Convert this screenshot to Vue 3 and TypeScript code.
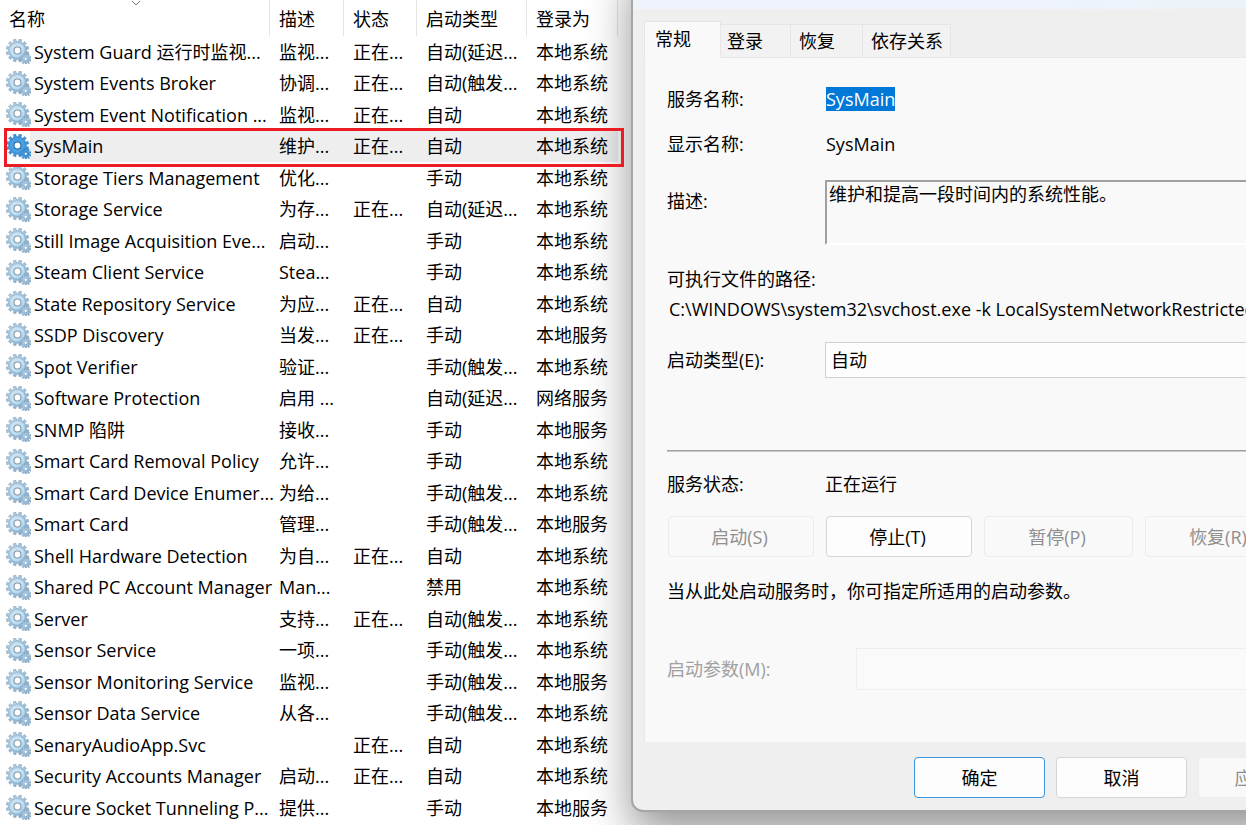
<script setup lang="ts">
import { ref } from 'vue'

interface Service {
  name: string
  desc: string
  status: string
  startup: string
  logon: string
}

const running = '正在...'
const sys = '本地系统'
const local = '本地服务'
const auto = '自动'
const manual = '手动'
const delayed = '自动(延迟...'
const autoTrigger = '自动(触发...'
const manualTrigger = '手动(触发...'

const row = (name: string, desc: string, status: string, startup: string, logon: string): Service => ({
  name, desc, status, startup, logon,
})

const services: Service[] = [
  row('System Guard 运行时监视...', '监视...', running, delayed, sys),
  row('System Events Broker', '协调...', running, autoTrigger, sys),
  row('System Event Notification ...', '监视...', running, auto, sys),
  row('SysMain', '维护...', running, auto, sys),
  row('Storage Tiers Management', '优化...', '', manual, sys),
  row('Storage Service', '为存...', running, delayed, sys),
  row('Still Image Acquisition Eve...', '启动...', '', manual, sys),
  row('Steam Client Service', 'Stea...', '', manual, sys),
  row('State Repository Service', '为应...', running, auto, sys),
  row('SSDP Discovery', '当发...', running, manual, local),
  row('Spot Verifier', '验证...', '', manualTrigger, sys),
  row('Software Protection', '启用 ...', '', delayed, '网络服务'),
  row('SNMP 陷阱', '接收...', '', manual, local),
  row('Smart Card Removal Policy', '允许...', '', manual, sys),
  row('Smart Card Device Enumer...', '为给...', '', manualTrigger, sys),
  row('Smart Card', '管理...', '', manualTrigger, local),
  row('Shell Hardware Detection', '为自...', running, auto, sys),
  row('Shared PC Account Manager', 'Man...', '', '禁用', sys),
  row('Server', '支持...', running, autoTrigger, sys),
  row('Sensor Service', '一项...', '', manualTrigger, sys),
  row('Sensor Monitoring Service', '监视...', '', manualTrigger, local),
  row('Sensor Data Service', '从各...', '', manualTrigger, sys),
  row('SenaryAudioApp.Svc', '', running, auto, sys),
  row('Security Accounts Manager', '启动...', running, auto, sys),
  row('Secure Socket Tunneling P...', '提供...', '', manual, local),
]

const selected = ref('SysMain')
const tabs = ['常规', '登录', '恢复', '依存关系']
const activeTab = ref('常规')
const startupType = ref('自动')

// Outline of a toothed wheel, teeth cut square between two radii.
function gear(cx: number, cy: number, outer: number, inner: number, teeth: number): string {
  const points: string[] = []
  const step = (Math.PI * 2) / teeth
  for (let i = 0; i < teeth; i++) {
    const a = (i + 0.5) * step
    const corners: [number, number][] = [
      [inner, a - step * 0.28], [outer, a - step * 0.24], [outer, a + step * 0.24], [inner, a + step * 0.28],
    ]
    for (const [r, t] of corners) {
      points.push(`${(cx + r * Math.cos(t)).toFixed(2)} ${(cy + r * Math.sin(t)).toFixed(2)}`)
    }
  }
  return `M${points.join('L')}Z`
}

const bigGear = gear(11, 11, 11, 8.6, 12)
const smallGear = gear(19, 19, 5.4, 3.8, 10)
</script>

<template>
  <div class="screen" lang="zh-CN">
    <svg class="defs" aria-hidden="true">
      <defs>
        <linearGradient id="steel" x1="0" y1="0" x2="1" y2="1">
          <stop offset="0" stop-color="#b9cfe0" />
          <stop offset="0.5" stop-color="#9dbfda" />
          <stop offset="1" stop-color="#7fa6c6" />
        </linearGradient>
        <linearGradient id="steel-face" x1="0" y1="0" x2="1" y2="1">
          <stop offset="0" stop-color="#d2e3ef" />
          <stop offset="0.6" stop-color="#bfe0f5" />
          <stop offset="1" stop-color="#9cc6e4" />
        </linearGradient>
      </defs>
    </svg>

    <main class="list">
      <table class="services">
        <colgroup>
          <col class="c-name"><col class="c-desc"><col class="c-status"><col class="c-type"><col class="c-logon">
        </colgroup>
        <thead>
          <tr>
            <th scope="col">
              名称
              <svg class="sort" viewBox="0 0 10 6" aria-hidden="true"><path d="M1 1L5 5L9 1" /></svg>
            </th>
            <th scope="col">描述</th>
            <th scope="col">状态</th>
            <th scope="col">启动类型</th>
            <th scope="col">登录为</th>
          </tr>
        </thead>
        <tbody>
          <tr v-for="s in services" :key="s.name" :class="{ selected: s.name === selected }" @click="selected = s.name">
            <td>
              <div class="name">
                <svg class="gear" viewBox="0 0 24 24" aria-hidden="true">
                  <path class="wheel" :d="bigGear" />
                  <circle class="face" cx="11" cy="11" r="7" />
                  <circle class="rim" cx="11" cy="11" r="3.9" />
                  <circle class="hole" cx="11" cy="11" r="2.8" />
                  <path class="wheel small" :d="smallGear" />
                  <circle class="hole" cx="19" cy="19" r="1.1" />
                </svg>
                <span>{{ s.name }}</span>
              </div>
            </td>
            <td>{{ s.desc }}</td>
            <td>{{ s.status }}</td>
            <td>{{ s.startup }}</td>
            <td>{{ s.logon }}</td>
          </tr>
        </tbody>
      </table>
    </main>

    <section class="dialog" role="dialog" aria-label="SysMain">
      <div class="titlebar"></div>
      <div class="content">
        <div class="tabs" role="tablist">
          <button
            v-for="t in tabs" :key="t" type="button" role="tab" class="tab"
            :class="{ active: t === activeTab }" :aria-selected="t === activeTab" @click="activeTab = t"
          >{{ t }}</button>
        </div>

        <div class="panel" role="tabpanel">
          <div class="field">
            <span>服务名称:</span>
            <span class="value"><mark>SysMain</mark></span>
          </div>
          <div class="field display">
            <span>显示名称:</span>
            <span class="value">SysMain</span>
          </div>
          <div class="field desc">
            <label for="desc">描述:</label>
            <textarea id="desc" readonly>维护和提高一段时间内的系统性能。</textarea>
          </div>
          <div class="path">
            <div>可执行文件的路径:</div>
            <div class="file">C:\WINDOWS\system32\svchost.exe -k LocalSystemNetworkRestricted -p</div>
          </div>
          <div class="field type">
            <label for="type">启动类型(E):</label>
            <select id="type" v-model="startupType">
              <option>自动</option>
              <option>手动</option>
              <option>禁用</option>
            </select>
          </div>
          <hr>
          <div class="field">
            <span>服务状态:</span>
            <span>正在运行</span>
          </div>
          <div class="actions">
            <button type="button" class="btn" disabled>启动(S)</button>
            <button type="button" class="btn">停止(T)</button>
            <button type="button" class="btn" disabled>暂停(P)</button>
            <button type="button" class="btn" disabled>恢复(R)</button>
          </div>
          <p class="hint">当从此处启动服务时，你可指定所适用的启动参数。</p>
          <div class="params">
            <label for="params">启动参数(M):</label>
            <input id="params" type="text" disabled>
          </div>
        </div>

        <div class="footer">
          <button type="button" class="btn primary">确定</button>
          <button type="button" class="btn">取消</button>
          <button type="button" class="btn" disabled>应用(A)</button>
        </div>
      </div>
    </section>
  </div>
</template>

<style>
html,
body {
  margin: 0;
  background: #fff;
}
</style>

<style scoped>
.screen {
  display: flex;
  align-items: flex-start;
  height: 100vh;
  overflow: hidden;
  background: #fff;
  color: #000;
  font: 18px/24px "Open Sans", "Noto Sans CJK SC", sans-serif;
}

.defs {
  position: absolute;
  width: 0;
  height: 0;
}

button,
input,
select,
textarea {
  box-sizing: border-box;
  margin: 0;
  color: inherit;
  font: inherit;
}

.list {
  flex: 0 0 631px;
}

.services {
  width: 618px;
  table-layout: fixed;
  border-collapse: separate;
  border-spacing: 0;
}

.c-name { width: 270px; }
.c-desc { width: 74px; }
.c-status { width: 73px; }
.c-type { width: 110px; }
.c-logon { width: 91px; }

th,
td {
  box-sizing: border-box;
  padding: 0 0 0 9px;
  text-align: left;
  font-weight: 400;
  white-space: nowrap;
}

th {
  position: relative;
  height: 36px;
  padding-top: 2px;
  border-right: 1px solid #e5e5e5;
}

.sort {
  position: absolute;
  top: 0;
  left: calc(50% - 4px);
  width: 10px;
  height: 6px;
  fill: none;
  stroke: #777;
}

td { height: 31px; }
tr:nth-child(even) td { height: 32px; }

td:first-child { padding-left: 6px; }

.name {
  display: flex;
  align-items: center;
  gap: 3px;
}

.gear {
  flex: none;
  width: 25px;
  height: 25px;
  margin: -1px 0;
}

.wheel { fill: url(#steel); stroke: #6f93b0; stroke-width: 0.4; }
.face { fill: url(#steel-face); }
.rim { fill: #8499aa; }
.hole { fill: #fff; }

.selected { position: relative; }
.selected td { background: #eee; }
.selected td:first-child { background: linear-gradient(to right, #fff 30px, #eee 30px); }
.selected .wheel { fill: #3f93d6; stroke: #2f7dbd; }
.selected .face { fill: #4ba1e2; }
.selected .rim { fill: #2468a5; }

.selected::after {
  content: "";
  position: absolute;
  inset: -2px -6px -5px 4px;
  z-index: 2;
  border: 3px solid #ec1c24;
}

.dialog {
  position: relative;
  z-index: 1;
  flex: 1;
  min-width: 0;
  margin: -40px -60px 0 0;
  border: 2px solid #a6a6a6;
  border-radius: 12px;
  background: #efefef;
  box-shadow: 0 20px 44px rgba(0, 0, 0, 0.42);
}

.titlebar {
  height: 47px;
  border-radius: 10px 10px 0 0;
  background: linear-gradient(to right, #eef3fc 60%, #eaf4f7);
}

.content {
  padding: 12px 0 12px 11px;
}

.tabs {
  display: flex;
  align-items: flex-end;
}

.tab {
  height: 33px;
  padding: 0;
  border: 1px solid #e5e5e5;
  border-width: 1px 1px 0 0;
  background: #f2f2f2;
  text-align: left;
  white-space: nowrap;
}

.tab:nth-child(2) { width: 70px; padding-left: 6px; }
.tab:nth-child(3) { width: 72px; padding-left: 8px; }
.tab:nth-child(4) { width: 88px; padding-left: 8px; }

.tab.active {
  width: 77px;
  height: 37px;
  margin-bottom: -1px;
  padding: 0 0 3px 10px;
  border-left-width: 1px;
  background: #f9f9f9;
}

.panel {
  padding: 29px 0 52px 22px;
  border: 1px solid #e8e8e8;
  border-right: 0;
  border-bottom: 0;
  background: #f9f9f9;
}

.tab.active { position: relative; }

.field {
  display: grid;
  grid-template-columns: 158px 1fr;
}

.value { padding-left: 1px; }

mark {
  display: inline-block;
  background: #0078d7;
  color: #fff;
}

.display { margin-top: 21px; }

.desc { margin-top: 24px; }
.desc label { padding-top: 9px; }

textarea {
  width: 100%;
  height: 65px;
  padding: 0 2px;
  border: 2px solid #a0a0a0;
  border-bottom-color: #fff;
  border-radius: 0;
  outline: 0;
  background: #f9f9f9;
  resize: none;
}

.path { margin-top: 22px; }
.file { margin-top: 6px; padding-left: 2px; white-space: nowrap; }

.type {
  align-items: center;
  margin-top: 21px;
}

select {
  width: 100%;
  height: 36px;
  padding: 0 5px;
  border: 1px solid #d0d0d0;
  border-radius: 0;
  appearance: none;
  background: #fdfdfd;
}

hr {
  height: 2px;
  margin: 72px 0 20px;
  border: 0;
  background: linear-gradient(#a0a0a0 50%, #c8c8c8 50%);
}

.btn {
  height: 41px;
  padding: 0;
  border: 1px solid #d6d6d6;
  border-radius: 4px;
  background: #fdfdfd;
}

.btn:disabled {
  border-color: #ececec;
  background: #f9f9f9;
  color: #8f8f8f;
}

.actions {
  display: grid;
  grid-template-columns: 146px 146px 149px 149px;
  column-gap: 12px;
  margin: 20px 0 22px 1px;
}

.actions .btn { padding-right: 3px; }

.hint { margin: 0; }

.params {
  display: grid;
  grid-template-columns: 189px 1fr;
  align-items: center;
  margin-top: 45px;
  color: #a0a0a0;
}

input {
  width: 100%;
  height: 42px;
  border: 1px solid #eee;
  background: #fafafa;
}

.footer {
  display: grid;
  grid-template-columns: repeat(3, 131px);
  column-gap: 11px;
  padding: 15px 0 0 270px;
}

.btn.primary { border-color: #3a96dd; }
</style>
